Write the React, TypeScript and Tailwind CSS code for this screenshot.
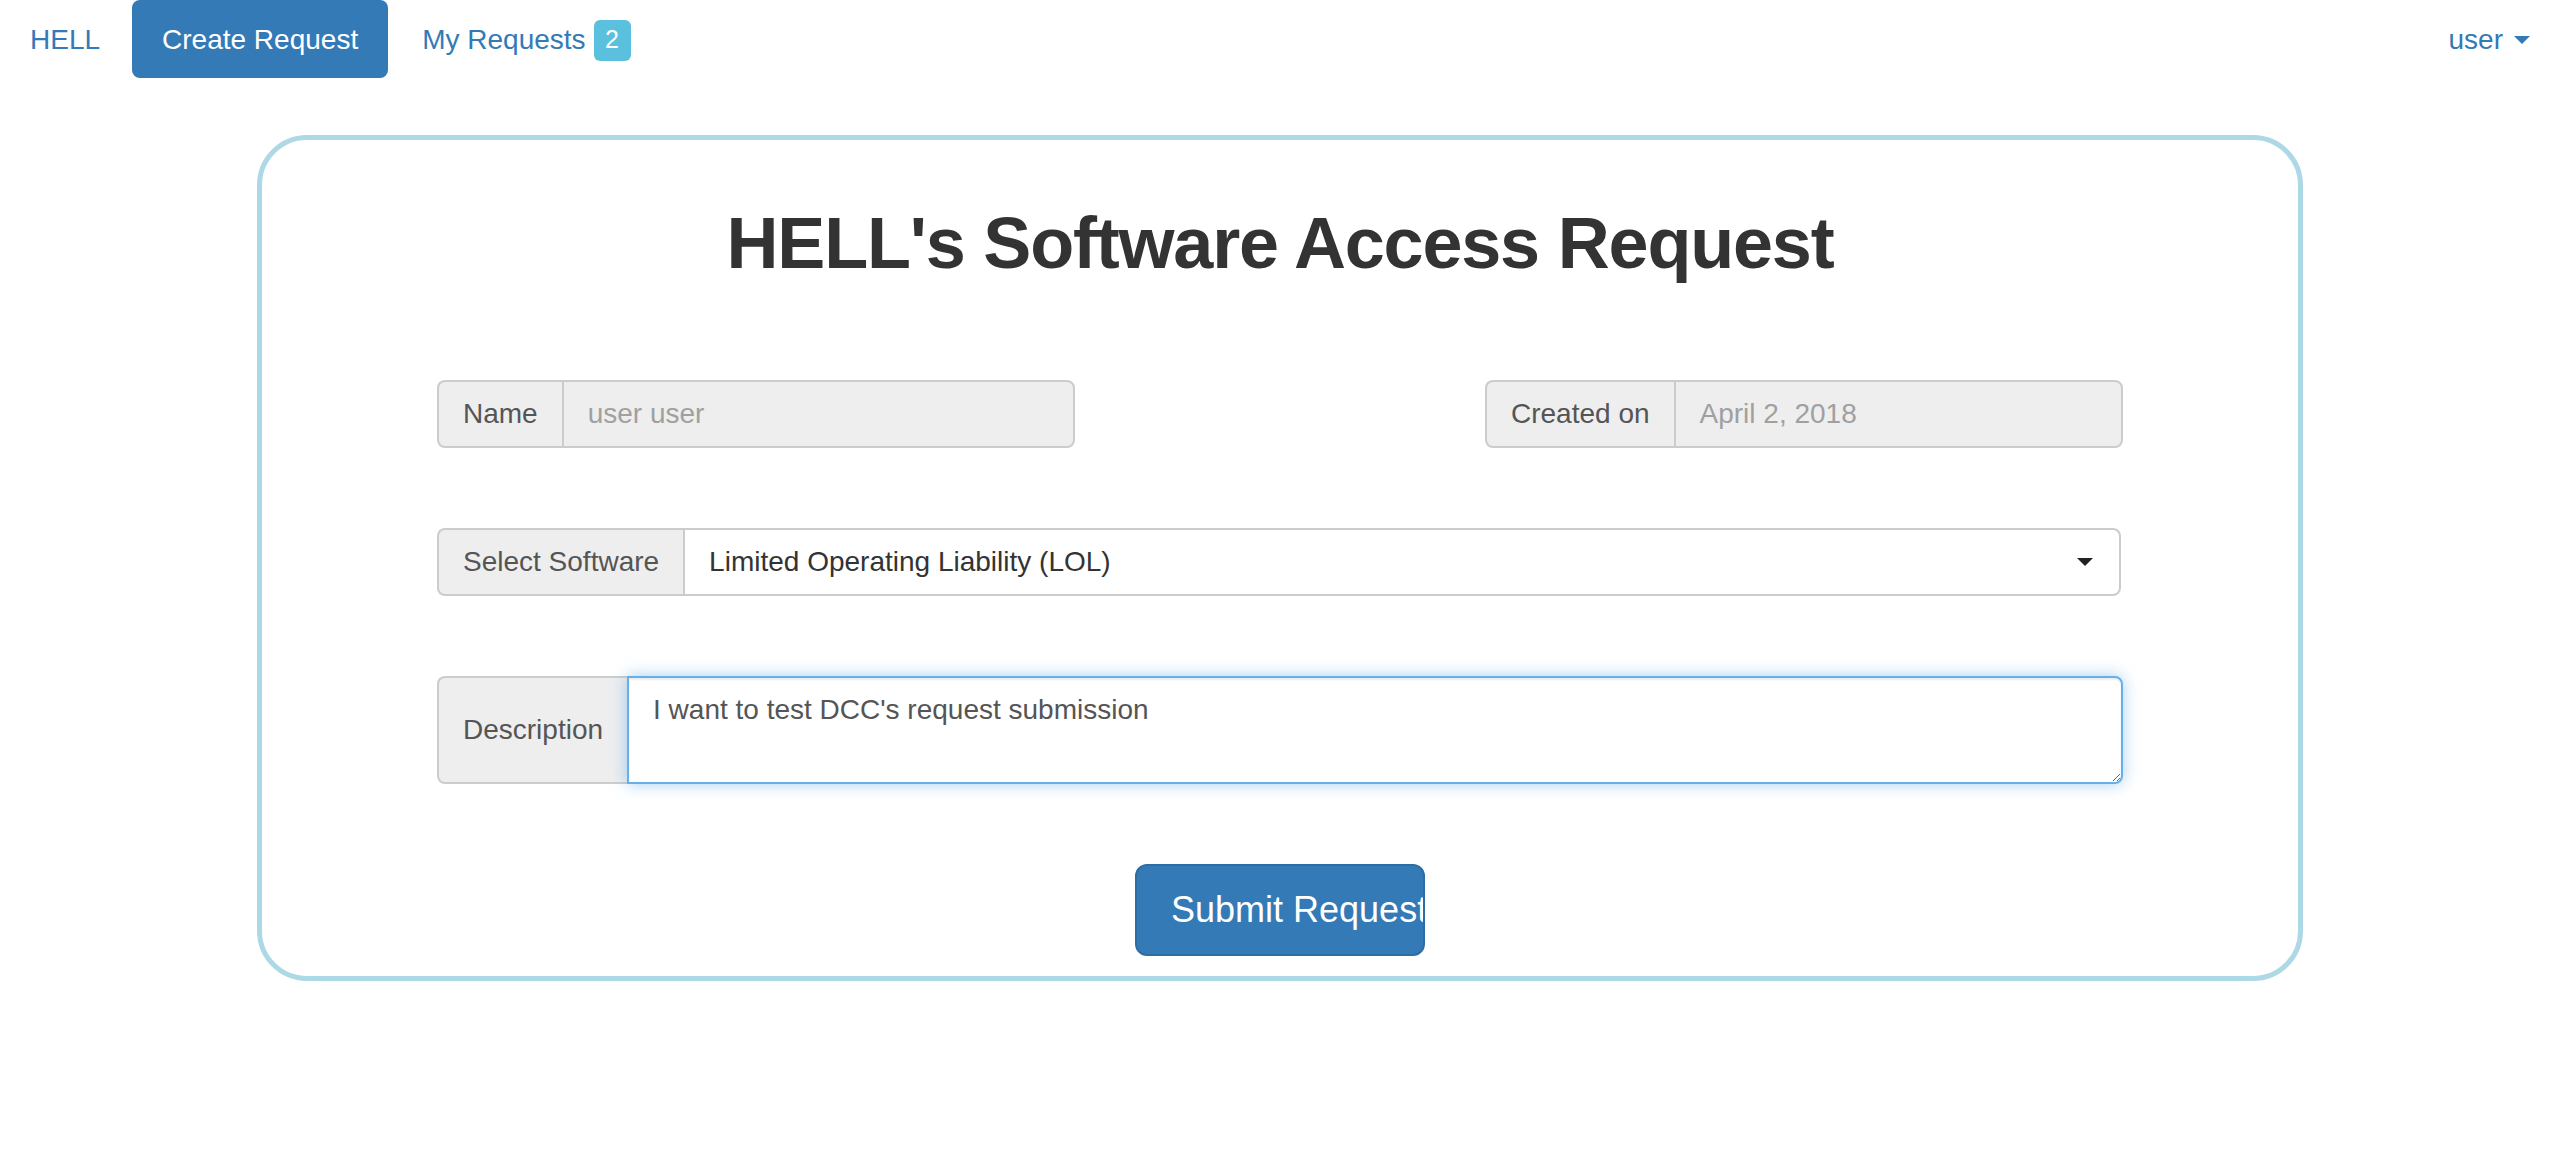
import React from "react";

const font = "font-['Liberation_Sans',Arial,sans-serif]";

function Caret({ className }: { className: string }) {
  return (
    <svg width="16" height="8" viewBox="0 0 16 8" className={className}>
      <path d="M0 0 L16 0 L8 8 Z" fill="currentColor" />
    </svg>
  );
}

function Addon({ children, className = "" }: { children: React.ReactNode; className?: string }) {
  return (
    <span
      className={`flex items-center px-[24px] bg-[#eeeeee] text-[#555555] border-2 border-[#cccccc] rounded-l-[8px] whitespace-nowrap ${className}`}
    >
      {children}
    </span>
  );
}

function DisabledField({ label, value }: { label: string; value: string }) {
  return (
    <div className="flex w-[638px] h-[68px] text-[28px] leading-[40px]">
      <Addon className="border-r-0">{label}</Addon>
      <div className="flex-1 flex items-center px-[24px] bg-[#eeeeee] text-[#a0a0a0] border-2 border-[#cccccc] rounded-r-[8px]">
        {value}
      </div>
    </div>
  );
}

export default function App() {
  return (
    <div className={`min-h-screen bg-white text-[#333333] ${font}`}>
      {/* top nav */}
      <nav className="flex items-start justify-between text-[28px] text-[#337ab7]">
        <div className="flex items-start">
          <a className="px-[30px] h-[78px] pt-[2px] flex items-center">HELL</a>
          <a className="ml-[2px] px-[30px] h-[78px] pt-[2px] flex items-center bg-[#337ab7] text-white rounded-[8px]">
            Create Request
          </a>
          <a className="pl-[34px] pr-[30px] h-[78px] pt-[2px] flex items-center gap-[8px]">
            My Requests
            <span className="w-[37px] h-[41px] flex items-center justify-center bg-[#5bc0de] text-white text-[25px] rounded-[6px]">
              2
            </span>
          </a>
        </div>
        <a className="pr-[30px] h-[78px] pt-[2px] flex items-center gap-[11px]">
          user
          <Caret className="text-[#337ab7]" />
        </a>
      </nav>

      {/* card */}
      <div className="mt-[57px] mx-auto w-[2046px] border-[5px] border-[#add8e6] rounded-[50px] pt-[63px] pb-[20px]">
        <h1 className="text-center text-[72px] leading-[80px] font-bold tracking-[-1.2px] text-[#333333]">
          HELL's Software Access Request
        </h1>

        <div className="mx-auto w-[1686px] mt-[97px] flex flex-col gap-[80px] text-[28px] leading-[40px]">
          <div className="flex justify-between">
            <DisabledField label="Name" value="user user" />
            <DisabledField label="Created on" value="April 2, 2018" />
          </div>

          <div className="flex h-[68px] w-[1684px]">
            <Addon className="border-r-0">Select Software</Addon>
            <div className="flex-1 flex items-center justify-between pl-[24px] pr-[26px] bg-white text-[#333333] border-2 border-[#cccccc] rounded-r-[8px]">
              <span>Limited Operating Liability (LOL)</span>
              <Caret className="text-[#222222]" />
            </div>
          </div>

          <div className="flex h-[108px]">
            <Addon className="border-r-0">Description</Addon>
            <textarea
              readOnly
              rows={2}
              defaultValue="I want to test DCC's request submission"
              className="flex-1 h-[108px] px-[24px] py-[12px] text-[28px] leading-[40px] text-[#555555] bg-white border-2 border-[#66afe9] rounded-r-[8px] outline-none resize-y shadow-[inset_0_2px_2px_rgba(0,0,0,0.075),0_0_16px_rgba(102,175,233,0.6)]"
            />
          </div>

          <div className="flex justify-center">
            <button className="w-[290px] h-[92px] overflow-hidden whitespace-nowrap text-left pl-[34px] text-[36px] text-white bg-[#337ab7] border-2 border-[#2e6da4] rounded-[12px]">
              Submit Request
            </button>
          </div>
        </div>
      </div>
    </div>
  );
}
